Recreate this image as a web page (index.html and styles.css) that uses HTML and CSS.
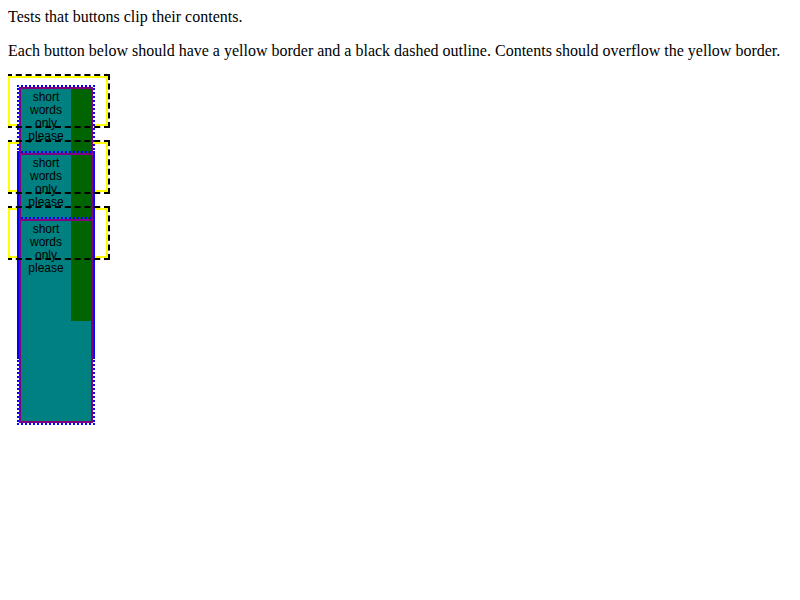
FILE: index.html
```html
<!DOCTYPE html>
<html>
<head>
<meta charset="utf-8">
<title>Button clipping</title>
<link rel="stylesheet" href="styles.css">
</head>
<body>
<div class="intro">Tests that buttons clip their contents.</div>
<p class="desc">Each button below should have a yellow border and a black dashed outline. Contents should overflow the yellow border.</p>
<div class="btn"><div class="inner"><div class="side"></div>short words only please</div></div>
<div class="btn"><div class="inner"><div class="side"></div>short words only please</div></div>
<div class="btn"><div class="inner"><div class="side"></div>short words only please</div></div>
</body>
</html>
```

FILE: styles.css
```css
html {
  background: #fff;
}
body {
  margin: 8px;
  min-height: 584px;
  font: 16px "Liberation Serif", serif;
  color: #000;
  background: #fff;
}
.intro {
  margin: 0;
}
.desc {
  margin: 16px 0;
}
.btn {
  box-sizing: border-box;
  width: 100px;
  height: 50px;
  border: 2px solid #ffff00;
  outline: 2px dashed #000;
  padding: 9px 0 0 9px;
  margin-bottom: 16px;
  overflow: visible;
}
.inner {
  display: inline-block;
  vertical-align: top;
  box-sizing: border-box;
  width: 74px;
  height: 204px;
  padding-top: 2px;
  border: 2px solid #800080;
  outline: 2px dotted #0000ff;
  background: #008080;
  font: 12px/13px "Liberation Sans", Arial, sans-serif;
  text-align: center;
  color: #000;
}
.side {
  float: right;
  width: 20px;
  height: 100px;
  margin-top: -2px;
  background: #006400;
}
```
